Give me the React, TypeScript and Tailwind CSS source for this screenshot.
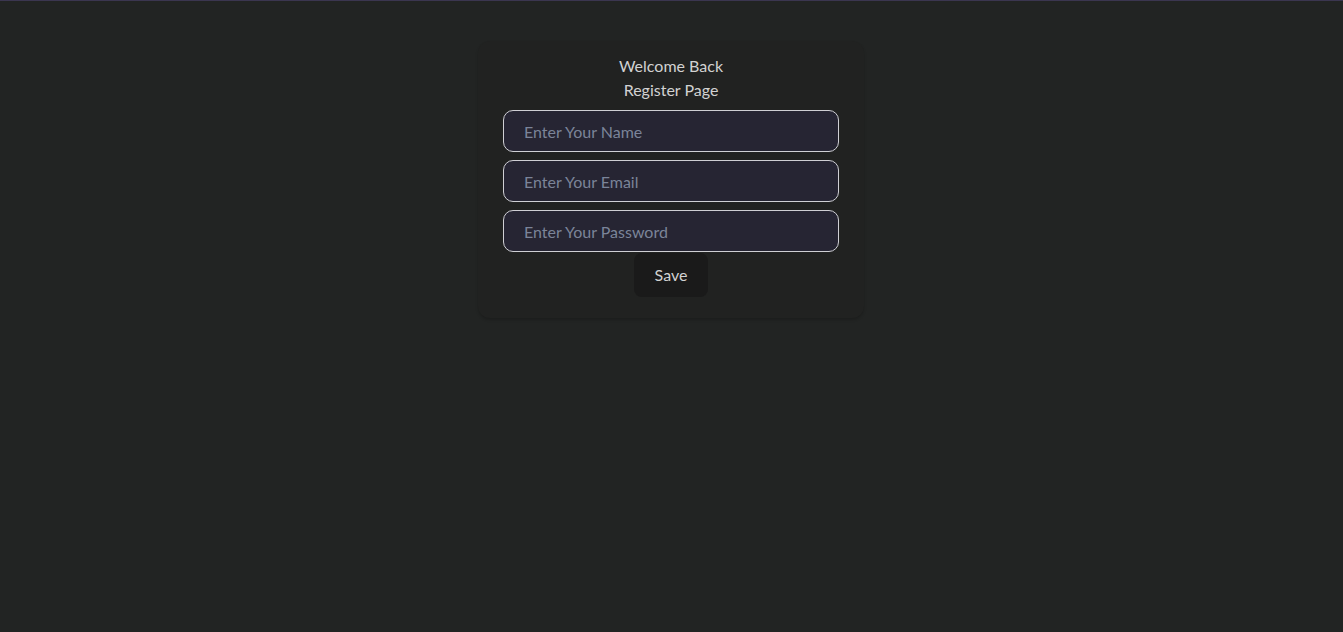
import React from "react";

export default function App() {
  return (
    <div
      className="min-h-[632px] w-full bg-[#222423] border-t border-[#3b3650] flex justify-center"
      style={{ fontFamily: "Lato, 'Noto Sans', sans-serif" }}
    >
      <div className="mt-[40px] mr-px self-start w-[386px] rounded-xl bg-[#212221] shadow-[0_2px_3px_rgba(0,0,0,0.18)] px-[25px] pt-[13px] pb-[21px] flex flex-col items-center">
        <p className="text-base leading-6 text-[#d2d2d2]">Welcome Back</p>
        <p className="text-base leading-6 text-[#d2d2d2]">Register Page</p>
        <form className="mt-[8px] w-full flex flex-col items-center gap-2" onSubmit={(e) => e.preventDefault()}>
          <input
            type="text"
            placeholder="Enter Your Name"
            className="w-full h-[42px] rounded-[10px] border border-[#cfcfd4] bg-[#262533] px-5 text-base text-[#d2d2d2] placeholder:text-[#7b8499] outline-none"
          />
          <input
            type="email"
            placeholder="Enter Your Email"
            className="w-full h-[42px] rounded-[10px] border border-[#cfcfd4] bg-[#262533] px-5 text-base text-[#d2d2d2] placeholder:text-[#7b8499] outline-none"
          />
          <input
            type="password"
            placeholder="Enter Your Password"
            className="w-full h-[42px] rounded-[10px] border border-[#cfcfd4] bg-[#262533] px-5 text-base text-[#d2d2d2] placeholder:text-[#7b8499] outline-none"
          />
          <button
            type="submit"
            className="-mt-[7px] w-[74px] h-[44px] rounded-lg bg-[#1a1a1a] text-base text-[#d2d2d2]"
          >
            Save
          </button>
        </form>
      </div>
    </div>
  );
}
